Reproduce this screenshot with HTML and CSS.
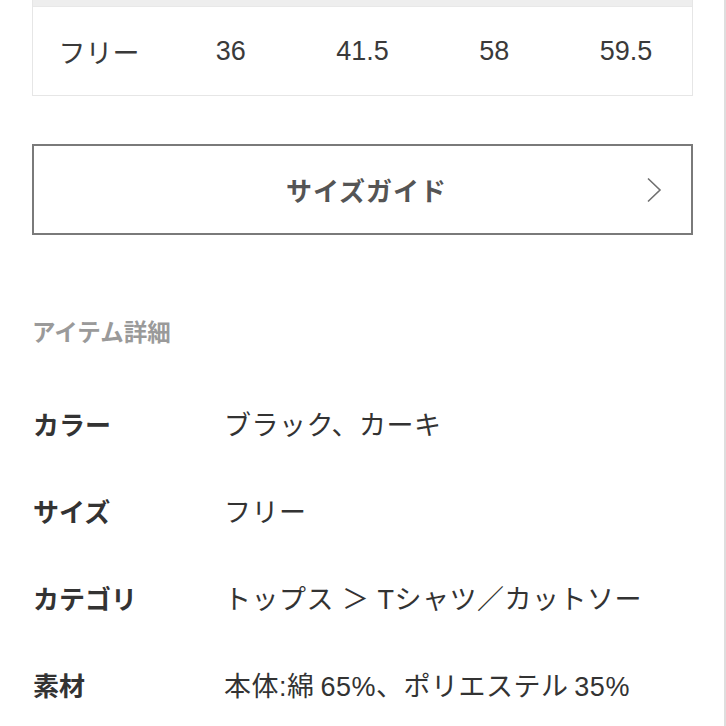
FILE: index.html
```html
<!DOCTYPE html>
<html lang="ja">
<head>
<meta charset="utf-8">
<title>アイテム詳細</title>
<link rel="stylesheet" href="styles.css">
</head>
<body>
<div class="page">
  <div class="size-table">
    <div class="size-head"></div>
    <div class="size-row">
      <span>フリー</span>
      <span>36</span>
      <span>41.5</span>
      <span>58</span>
      <span>59.5</span>
    </div>
  </div>

  <a class="guide-btn" href="#">
    <span class="guide-spacer"></span>
    <span class="guide-label">サイズガイド</span>
    <span class="guide-arrow">
      <svg width="16" height="26" viewBox="0 0 16 26"><polyline points="2,1.5 14,13 2,24.5" fill="none" stroke="#6f6f6f" stroke-width="1.6"/></svg>
    </span>
  </a>

  <h2 class="detail-title">アイテム詳細</h2>

  <dl class="detail-list">
    <div class="detail-row"><dt>カラー</dt><dd>ブラック、カーキ</dd></div>
    <div class="detail-row"><dt>サイズ</dt><dd>フリー</dd></div>
    <div class="detail-row"><dt>カテゴリ</dt><dd>トップス ＞ Tシャツ／カットソー</dd></div>
    <div class="detail-row"><dt>素材</dt><dd>本体:綿&#8201;65%、ポリエステル&#8201;35%</dd></div>
  </dl>
</div>
</body>
</html>
```

FILE: styles.css
```css
html, body {
  margin: 0;
  padding: 0;
  background: #ffffff;
}

body {
  font-family: "Liberation Sans", "Noto Sans CJK JP", sans-serif;
  color: #333333;
  overflow: hidden;
}

.page {
  width: 726px;
  height: 726px;
  box-sizing: border-box;
  padding: 0 31px 0 32px;
  border-right: 2px solid #dedede;
}

.size-table {
  border: 1px solid #e6e6e6;
  border-top: none;
}

.size-head {
  height: 6px;
  background: #eeeeee;
  border-bottom: 1px solid #e8e8e8;
}

.size-row {
  display: grid;
  grid-template-columns: repeat(5, 1fr);
  align-items: center;
  height: 88px;
  font-size: 27px;
  color: #3a3a3a;
}

.size-row span {
  text-align: center;
}

.guide-btn {
  margin-top: 48px;
  height: 91px;
  box-sizing: border-box;
  border: 2px solid #7a7a7a;
  display: grid;
  grid-template-columns: 1fr auto 1fr;
  align-items: center;
  text-decoration: none;
  color: #555555;
}

.guide-label {
  font-size: 26px;
  font-weight: bold;
  letter-spacing: 1px;
  padding-left: 8px;
}

.guide-arrow {
  justify-self: end;
  padding-right: 29px;
  display: flex;
  align-items: center;
}

.detail-title {
  margin: 83px 0 0 0;
  font-size: 23.5px;
  line-height: 30px;
  font-weight: bold;
  color: #9a9a9a;
}

.detail-list {
  margin: 32px 0 0 0;
}

.detail-row {
  display: grid;
  grid-template-columns: 192px 1fr;
  align-items: center;
  height: 87px;
}

.detail-row dt {
  font-size: 26px;
  font-weight: bold;
  color: #333333;
  padding-left: 1px;
}

.detail-row dd {
  margin: 0;
  font-size: 27px;
  letter-spacing: 0.5px;
  color: #333333;
}
```
